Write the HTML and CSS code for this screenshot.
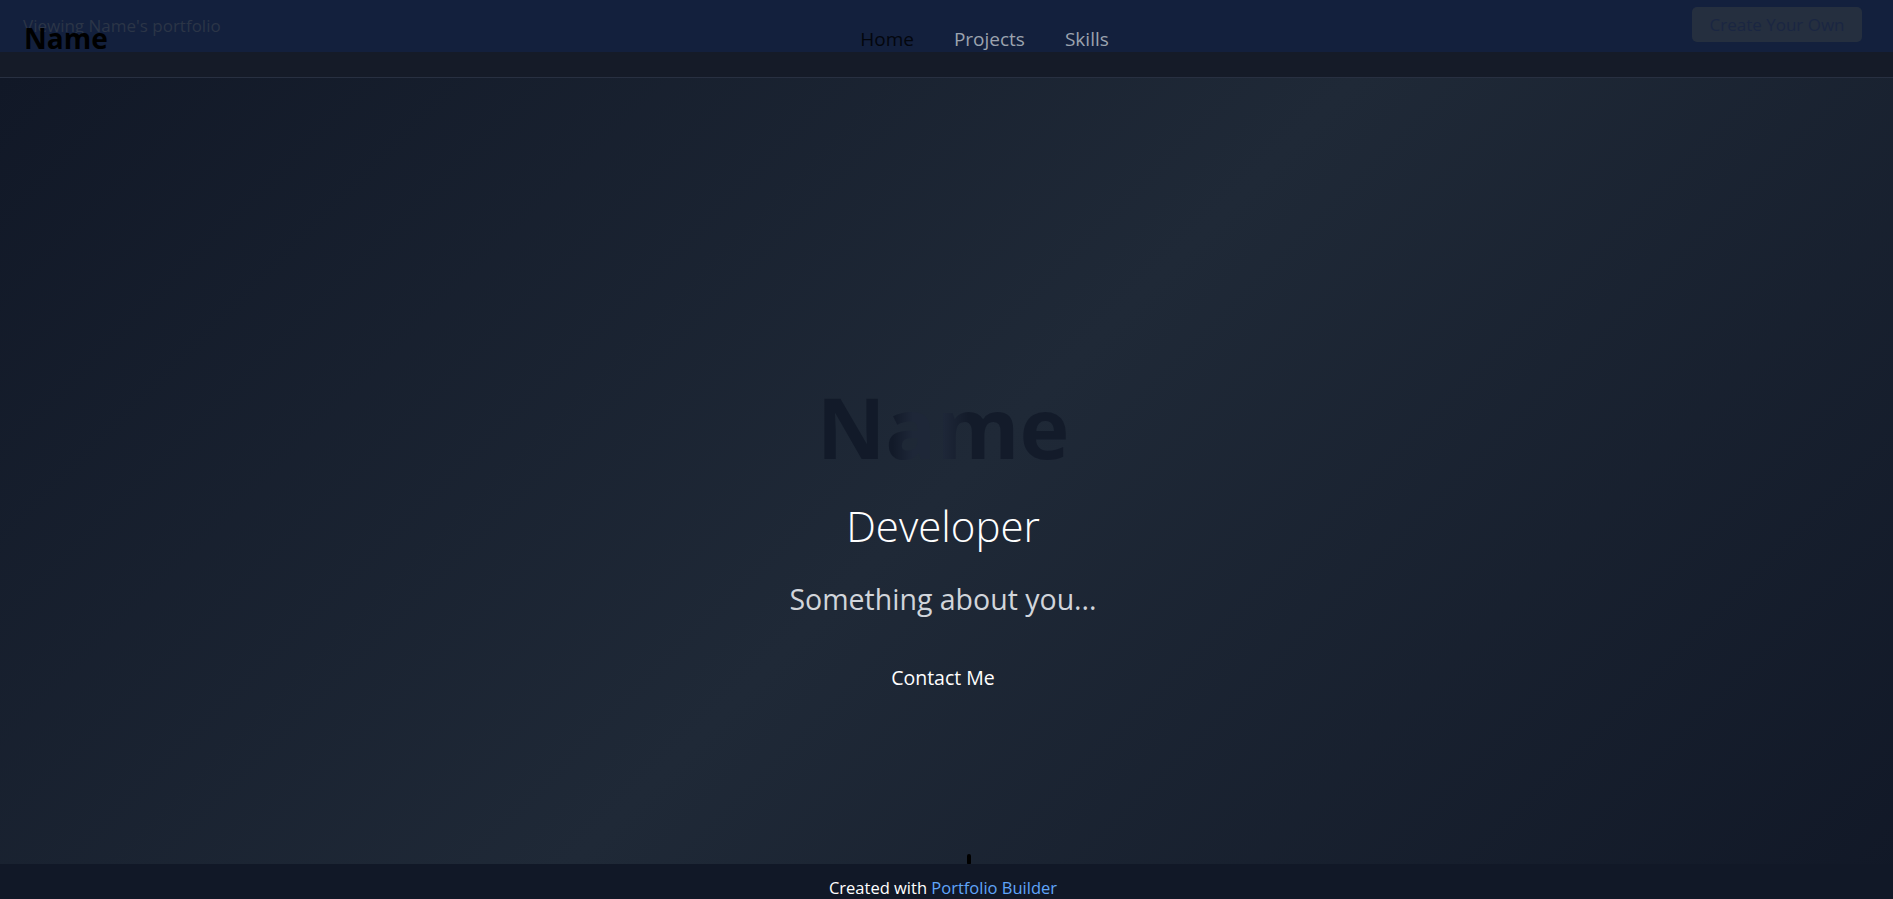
FILE: index.html
```html
<!DOCTYPE html>
<html lang="en">
<head>
<meta charset="utf-8">
<title>Name - Portfolio</title>
<link rel="stylesheet" href="styles.css">
</head>
<body>
<div class="page">
  <header class="site-header">
    <div class="preview-banner">
      <span class="preview-text">Viewing Name's portfolio</span>
      <button class="create-btn">Create Your Own</button>
    </div>
    <div class="nav-bar">
      <a class="logo" href="#">Name</a>
      <nav class="nav-links">
        <a class="nav-link active" href="#">Home</a>
        <a class="nav-link" href="#">Projects</a>
        <a class="nav-link" href="#">Skills</a>
      </nav>
      <span class="nav-spacer"></span>
    </div>
  </header>
  <main class="hero">
    <div class="hero-content">
      <h1 class="hero-name">Name</h1>
      <h2 class="hero-role">Developer</h2>
      <p class="hero-about">Something about you...</p>
      <a class="contact-btn" href="#">Contact Me</a>
    </div>
    <span class="scroll-indicator"></span>
  </main>
  <footer class="site-footer">
    Created with <a class="footer-link" href="#">Portfolio Builder</a>
  </footer>
</div>
</body>
</html>
```

FILE: styles.css
```css
* { box-sizing: border-box; }
html, body {
  margin: 0;
  padding: 0;
  height: 100%;
  overflow: hidden;
}
body {
  font-family: "Open Sans", "Noto Sans", sans-serif;
  background: #111827;
  color: #fff;
}
a { text-decoration: none; color: inherit; }

.page {
  position: relative;
  height: 100vh;
  display: flex;
  flex-direction: column;
}

/* Header */
.site-header {
  position: relative;
  height: 78px;
  background: #151b28;
  border-bottom: 1px solid #283041;
  flex-shrink: 0;
}
.preview-banner {
  position: absolute;
  top: 0;
  left: 0;
  right: 0;
  height: 52px;
  background: #13203d;
  display: flex;
  align-items: center;
  justify-content: space-between;
  padding: 0 31px 0 23px;
}
.preview-text {
  font-size: 17px;
  color: #2b3547;
  margin-top: -2px;
}
.create-btn {
  font-family: inherit;
  font-size: 17px;
  color: #1a2642;
  background: #252f3f;
  border: none;
  border-radius: 5px;
  width: 170px;
  height: 35px;
  padding: 0;
  margin-top: -3px;
}
.nav-bar {
  position: relative;
  height: 77px;
  display: flex;
  align-items: center;
  justify-content: space-between;
  padding: 0 24px;
}
.logo {
  font-size: 28px;
  font-weight: 700;
  color: #000;
  width: 200px;
  line-height: 1;
  margin-top: -2px;
}
.nav-links {
  display: flex;
  gap: 40px;
}
.nav-link {
  font-size: 19px;
  color: #9ca3af;
}
.nav-link.active { color: #03060d; }
.nav-spacer { width: 124px; }

/* Hero */
.hero {
  position: relative;
  flex: 1;
  background: linear-gradient(135deg, #111827 0%, #1f2937 50%, #111827 100%);
  display: flex;
  flex-direction: column;
  align-items: center;
  padding-right: 7px;
}
.hero-content {
  display: flex;
  flex-direction: column;
  align-items: center;
  padding-top: 305px;
  text-align: center;
}
.hero-name {
  margin: 0;
  font-size: 84.5px;
  line-height: 88px;
  font-weight: 700;
  background: linear-gradient(90deg, #121a29 0%, #121a29 30%, #1e2738 38%, #1e2738 50%, #131b2a 60%, #131b2a 100%);
  -webkit-background-clip: text;
  background-clip: text;
  color: transparent;
}
.hero-role {
  margin: 33px 0 0;
  font-size: 42px;
  line-height: 44px;
  font-weight: 300;
  color: #ffffff;
}
.hero-about {
  margin: 33px 0 0;
  font-size: 28.5px;
  line-height: 36px;
  color: #d1d5db;
}
.contact-btn {
  margin-top: 47px;
  font-size: 19.5px;
  line-height: 28px;
  font-weight: 500;
  color: #fff;
  padding: 0 12px;
}
.scroll-indicator {
  position: absolute;
  left: 967px;
  bottom: 34px;
  width: 4px;
  height: 11px;
  border-radius: 2px;
  background: #000;
}

/* Footer */
.site-footer {
  position: absolute;
  left: 0;
  right: 0;
  bottom: 0;
  height: 35px;
  background: #111827;
  text-align: center;
  font-size: 16.5px;
  line-height: 1.5;
  color: #fff;
  padding: 12px 7px 0 0;
}
.footer-link { color: #60a5fa; }
```
